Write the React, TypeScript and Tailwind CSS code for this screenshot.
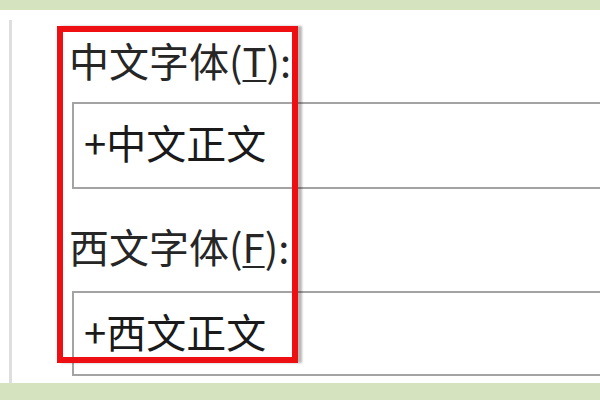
import React from 'react'

const cjk = { fontFamily: '"Noto Sans CJK SC", "Noto Sans", sans-serif' }

function FontField({
  label,
  accessKey,
  value,
  inputHeight,
  textNudge,
}: {
  label: string
  accessKey: string
  value: string
  inputHeight: string
  textNudge: string
}) {
  return (
    <>
      <div className="-ml-[3px] h-[48px] whitespace-nowrap text-[40px] leading-[48px] text-[#262626]">
        {label}(<span className="underline decoration-2 underline-offset-[3px]">{accessKey}</span>):
      </div>
      <div
        className={`flex items-center border-2 border-r-0 border-[#a3a3a3] bg-white pl-[10px] ${inputHeight} ${textNudge}`}
      >
        <span className="whitespace-nowrap text-[40px] leading-[48px] text-[#1a1a1a]">{value}</span>
      </div>
    </>
  )
}

export default function App() {
  return (
    <div className="relative flex h-[400px] w-[600px] flex-col overflow-hidden bg-white" style={cjk}>
      {/* 顶部绿边 */}
      <div className="h-[10px] shrink-0 bg-[#d6e3bf]" />

      <div className="flex flex-1">
        {/* 左侧窗体边线 */}
        <div className="w-[9px] shrink-0" />
        <div className="mt-[10px] w-[3px] shrink-0 bg-[#dedede]" />

        {/* 字体设置区 */}
        <div className="flex flex-1 flex-col pl-[60px] pt-[26px]">
          <FontField
            label="中文字体"
            accessKey="T"
            value="+中文正文"
            inputHeight="mt-[18px] h-[87px]"
            textNudge="pb-[8px]"
          />
          <div className="mt-[33px]" />
          <FontField
            label="西文字体"
            accessKey="F"
            value="+西文正文"
            inputHeight="mt-[21px] h-[85px]"
            textNudge="pb-[6px]"
          />
        </div>
      </div>

      {/* 底部绿边 */}
      <div className="h-[17px] shrink-0 bg-[#d6e3bf]" />

      {/* 红色标注框 */}
      <div className="pointer-events-none absolute left-[57px] top-[26px] h-[337px] w-[241px] border-[6px] border-[#ee0f12] shadow-[4px_0_2px_rgba(0,0,0,0.28)]" />
    </div>
  )
}
